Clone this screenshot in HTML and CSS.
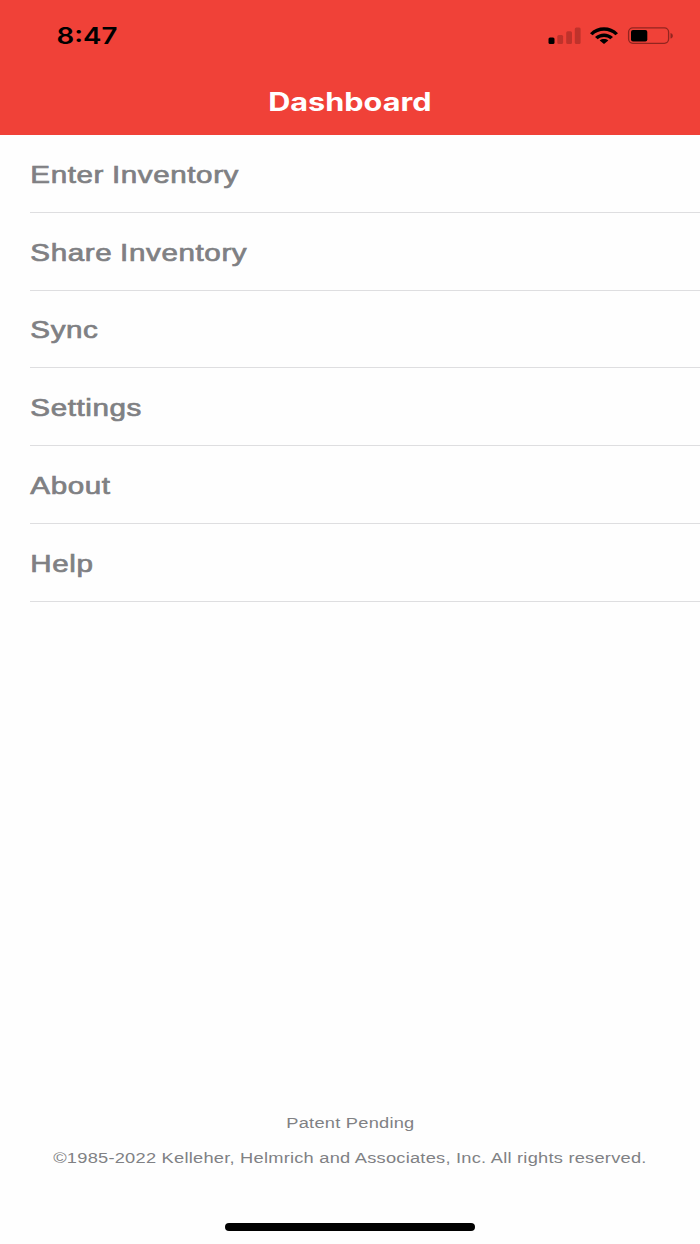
FILE: index.html
```html
<!DOCTYPE html>
<html lang="en">
<head>
<meta charset="utf-8">
<title>Dashboard</title>
<link rel="stylesheet" href="styles.css">
</head>
<body>
<div class="screen">
  <header class="header">
    <div class="status">
      <span class="time">8:47</span>
      <svg class="indicators" width="130" height="24" viewBox="0 0 130 24">
        <rect x="3.5" y="13.5" width="6" height="6.500" rx="1.5"/>
        <g fill="#bf322b">
          <rect x="12.3" y="11" width="5.800" height="9" rx="1.5"/>
          <rect x="21.2" y="7.2" width="5.800" height="12.8" rx="1.5"/>
          <rect x="29.8" y="3.5" width="5.800" height="16.5" rx="1.5"/>
        </g>
        <path d="M45 9.2C52.5 1.4 65.500 1.400 73 9.200L70.400 11.300C64.500 5.300 53.500 5.300 47.600 11.300Z"/>
        <path d="M50 13C55 8.200 63 8.200 68 13L65.300 15.200C61.700 12.200 56.300 12.200 52.700 15.200Z"/>
        <path d="M54.700 16.400C57 14.500 61 14.500 63.300 16.400L59 19.900Z"/>
        <rect x="83.600" y="3.900" width="40" height="15.400" rx="4.200" fill="none" stroke="#92251f" stroke-width="1.300"/>
        <rect x="86" y="6" width="16.300" height="11.400" rx="2"/>
        <path d="M125.500 9C128.600 9.700 128.600 13.900 125.500 14.600Z" fill="#92251f"/>
      </svg>
    </div>
    <h1 class="title"><span class="wide">Dashboard</span></h1>
  </header>
  <ul class="menu">
    <li class="item"><span class="label">Enter Inventory</span></li>
    <li class="item"><span class="label">Share Inventory</span></li>
    <li class="item"><span class="label">Sync</span></li>
    <li class="item"><span class="label">Settings</span></li>
    <li class="item"><span class="label">About</span></li>
    <li class="item"><span class="label">Help</span></li>
  </ul>
  <footer class="footer">
    <p class="note">Patent Pending</p>
    <p class="note">©1985-2022 Kelleher, Helmrich and Associates, Inc. All rights reserved.</p>
    <div class="home-bar"></div>
  </footer>
</div>
</body>
</html>
```
FILE: styles.css
```css
* { box-sizing: border-box; }
body {
  margin: 0;
  background: #fefefe;
  font-family: "Liberation Sans", Arial, sans-serif;
}
.screen {
  display: flex;
  flex-direction: column;
  height: 1244px;
  overflow: hidden;
}
.header {
  height: 135px;
  background: #f04138;
}
.status {
  display: flex;
  justify-content: space-between;
  padding: 24px 25px 0 56px;
  height: 84px;
}
.time {
  font: 600 22.500px/24px Inter, sans-serif;
  transform: translateX(0.500px) scaleX(1.230);
  transform-origin: left;
}
.title {
  margin: 0;
  text-align: center;
  color: #fff;
  font: 700 25px/36px Inter, sans-serif;
}
.wide {
  display: inline-block;
  transform: translate(0.200px, -0.500px) scaleX(1.225);
}
.menu {
  list-style: none;
  margin: 0;
  padding: 0 0 0 30px;
}
.item {
  height: 77.800px;
  display: flex;
  align-items: center;
  border-bottom: 1px solid #dedee0;
  padding-top: 3px;
}
.label {
  color: #7f8083;
  font-size: 24.600px;
  line-height: 30px;
  letter-spacing: 0.500px;
  word-spacing: -0.800px;
  -webkit-text-stroke: 0.700px #7f8083;
  transform: translateX(0.300px) scaleX(1.203);
  transform-origin: left;
}
.footer {
  margin-top: auto;
  display: flex;
  flex-direction: column;
  align-items: center;
  height: 133px;
}
.note {
  margin: 0 0 11px;
  color: #808184;
  font-size: 15.500px;
  line-height: 24px;
  letter-spacing: 0.200px;
  white-space: nowrap;
  transform: scaleX(1.178);
}
.home-bar {
  width: 250px;
  height: 8px;
  margin-top: 42px;
  border-radius: 4px;
  background: #000;
}
```
